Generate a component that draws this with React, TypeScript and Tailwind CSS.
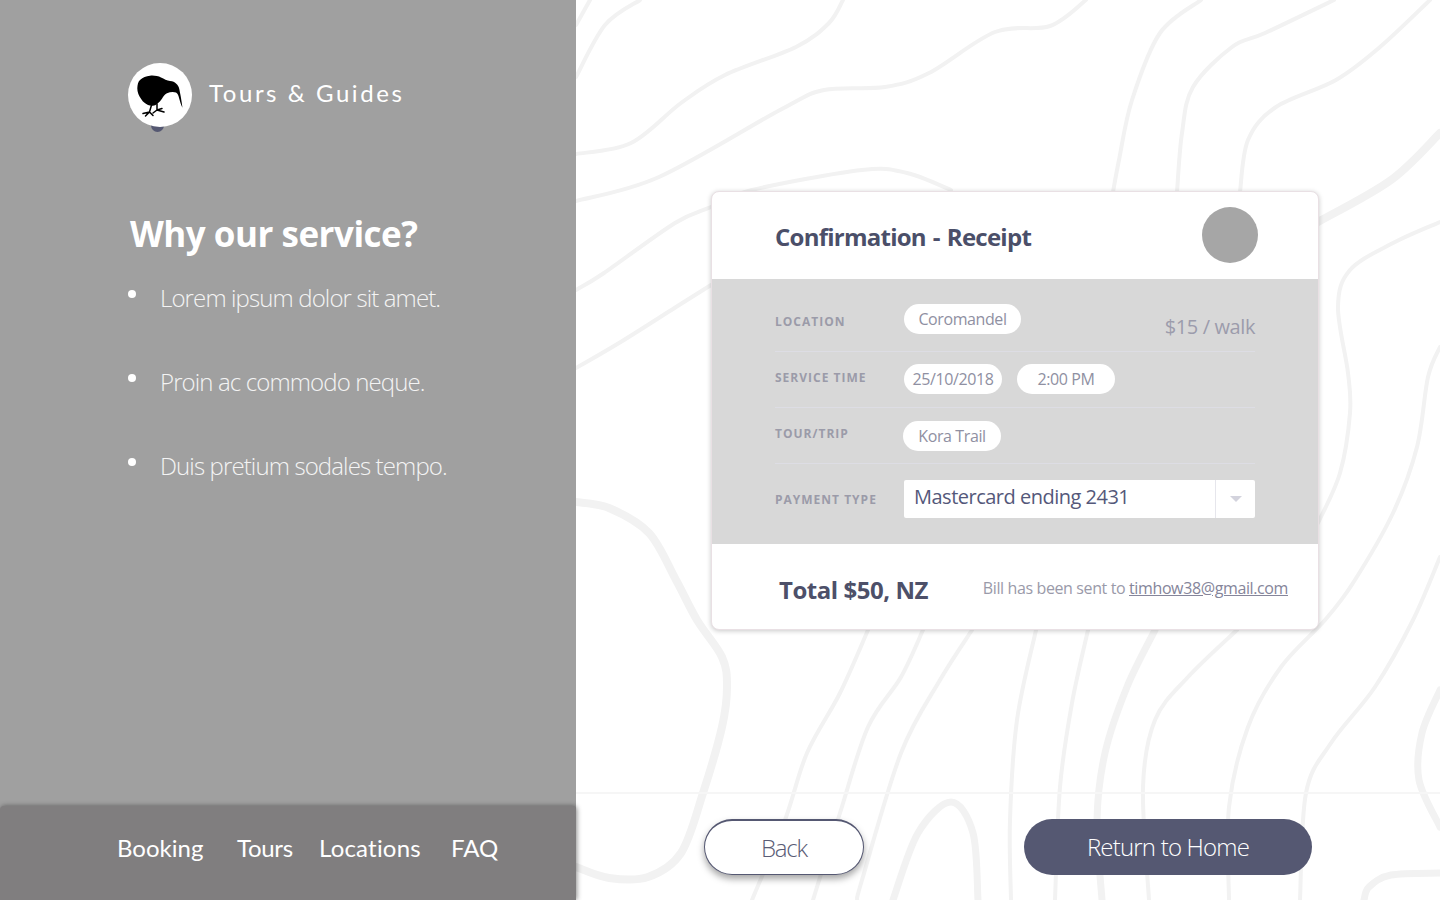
import React from "react";

type Pt = [number, number];

// page coordinates, the 576px sidebar is taken off in smooth()
const contours: { w: number; pts: Pt[] }[] = [
  { w: 4, pts: [[576, 25], [590, 0]] },
  { w: 4, pts: [[576, 77], [605, 25], [640, 0]] },
  { w: 4, pts: [[576, 154], [631, 143], [681, 103], [725, 75], [796, 47], [829, 23], [843, 0]] },
  { w: 4, pts: [[576, 201], [659, 177], [780, 110], [824, 90], [885, 87], [929, 73], [995, 32], [1050, 26], [1086, 0]] },
  { w: 4, pts: [[576, 290], [604, 273], [675, 223], [711, 207], [752, 190], [862, 170], [907, 173], [951, 190]] },
  { w: 4, pts: [[576, 368], [619, 343], [676, 307], [711, 285]] },
  { w: 4, pts: [[1201, 0], [1160, 33], [1132, 100], [1119, 160], [1113, 192]] },
  { w: 4, pts: [[1334, 0], [1265, 33], [1232, 47], [1193, 87], [1182, 133], [1177, 192]] },
  { w: 4, pts: [[1430, 0], [1380, 47], [1336, 80], [1276, 107], [1248, 140], [1240, 192]] },
  { w: 8, pts: [[1440, 133], [1391, 180], [1318, 222]] },
  { w: 4, pts: [[1440, 222], [1393, 243], [1350, 270], [1338, 307], [1348, 373], [1350, 413], [1340, 473], [1318, 523]] },
  { w: 4, pts: [[1440, 347], [1428, 377], [1417, 447], [1393, 513], [1353, 583], [1325, 620], [1281, 667], [1248, 727], [1229, 807], [1229, 900]] },
  { w: 4, pts: [[1440, 557], [1413, 620], [1375, 687], [1331, 743], [1306, 793], [1300, 900]] },
  { w: 4, pts: [[1237, 630], [1188, 677], [1155, 720], [1143, 787], [1149, 900]] },
  { w: 7, pts: [[1155, 630], [1127, 687], [1105, 753], [1097, 820], [1102, 900]] },
  { w: 4, pts: [[1088, 630], [1072, 703], [1060, 787], [1055, 900]] },
  { w: 4, pts: [[1036, 630], [1017, 720], [1010, 820], [1011, 900]] },
  { w: 4, pts: [[972, 630], [940, 680], [901, 753], [862, 880], [857, 900]] },
  { w: 4, pts: [[923, 630], [901, 677], [868, 727], [840, 813], [813, 900]] },
  { w: 4, pts: [[868, 630], [840, 693], [807, 753], [785, 820], [752, 900]] },
  { w: 7, pts: [[893, 900], [918, 833], [951, 802], [973, 833], [978, 900]] },
  { w: 8, pts: [[576, 502], [609, 508], [649, 533], [676, 580], [697, 620], [722, 657], [727, 687], [722, 727], [703, 793], [681, 853], [648, 877], [609, 878], [576, 867]] },
  { w: 7, pts: [[1440, 690], [1422, 733], [1419, 780], [1440, 827]] },
  { w: 7, pts: [[1440, 873], [1391, 875], [1369, 887], [1364, 900]] },
];

// catmull-rom through the traced points
function smooth(pts: Pt[]) {
  let d = `M${pts[0][0] - 576} ${pts[0][1]}`;
  for (let i = 0; i < pts.length - 1; i++) {
    const p0 = pts[i - 1] ?? pts[i];
    const p1 = pts[i];
    const p2 = pts[i + 1];
    const p3 = pts[i + 2] ?? p2;
    const c1x = p1[0] + (p2[0] - p0[0]) / 6 - 576;
    const c1y = p1[1] + (p2[1] - p0[1]) / 6;
    const c2x = p2[0] - (p3[0] - p1[0]) / 6 - 576;
    const c2y = p2[1] - (p3[1] - p1[1]) / 6;
    d += ` C${c1x} ${c1y} ${c2x} ${c2y} ${p2[0] - 576} ${p2[1]}`;
  }
  return d;
}

const Kiwi = () => (
  <svg viewBox="0 0 64 64" className="w-16 h-16">
    <path
      d="M9.3 25.3C9.5 21.5 10 19 12 17C15 14 18 13 22 12.7C26 12.3 30 13 33 14.5C36 16 39 17.5 42 18C45 18.4 46.5 19 48 20.5C50 22 51 24 51.4 26.5C52 30 52.6 32 53 35C53.4 38 54.2 41.5 54.4 44.8C53 42 52 38.5 51.2 35.5C50.5 32.8 49.8 30.5 48 29.6C45.5 28.6 42 29 39 30.2C37 31.2 36 32.5 35 34C33.5 36.5 32.5 38 31 39.2C29 41 27.5 42.2 26 42.6C24 43 22 42.8 20 42C17 40.6 15 38.8 13.5 36.5C10.8 33 9.2 29 9.3 25.3Z"
      fill="#000"
    />
    <g stroke="#000" strokeWidth="1.5" fill="none" strokeLinecap="round">
      <path d="M23.5 42L21.5 49M21.5 49L15 50.5M21.5 49L17.5 53M21.5 49L25 52.5" />
      <path d="M29 41L29 47M29 47L36 49M29 47L34 45.5M29 47L25 50" />
    </g>
  </svg>
);

const Bullet = ({ text }: { text: string }) => (
  <li className="flex items-start h-[84px]">
    <span className="w-2 h-2 rounded-full bg-white mt-[9px] mr-6 -ml-[2px]" />
    <span className="font-['Open_Sans'] font-light text-[24px] leading-[34px] text-[#f4f4f4] tracking-[-0.88px]">{text}</span>
  </li>
);

const Label = ({ text, className }: { text: string; className: string }) => (
  <span className={`w-[129px] shrink-0 font-['Open_Sans'] font-bold text-[12px] leading-4 tracking-[1px] text-[#9b9ba9] ${className}`}>
    {text}
  </span>
);

const Pill = ({ text, className }: { text: string; className: string }) => (
  <span className={`h-[30px] pb-px flex items-center justify-center rounded-full bg-white font-['Open_Sans'] text-[16px] text-[#8f90a2] tracking-[-0.4px] ${className}`}>
    {text}
  </span>
);

export default function App() {
  return (
    <div className="flex w-full h-[900px] overflow-hidden bg-white font-['Open_Sans',sans-serif]">
      <aside className="relative z-10 w-[576px] shrink-0 h-full flex flex-col bg-[#a0a0a0]">
        <div className="flex items-center pl-[128px] pt-[63px]">
          <div className="relative w-16 h-16">
            <span className="absolute left-[23px] top-[62px] w-[13px] h-[7px] rounded-b-full bg-[#555872]" />
            <span className="absolute inset-0 rounded-full bg-white" />
            <span className="absolute inset-0">
              <Kiwi />
            </span>
          </div>
          <span className="ml-[17px] -mt-1 font-['Lato'] text-[24px] leading-8 tracking-[2.55px] text-white">Tours &amp; Guides</span>
        </div>

        <h1 className="pl-[130px] pt-[83px] font-['Open_Sans'] font-bold text-[35px] leading-[48px] text-white tracking-[-0.5px]">
          Why our service?
        </h1>
        <ul className="pl-[130px] pt-[23px]">
          <Bullet text="Lorem ipsum dolor sit amet." />
          <Bullet text="Proin ac commodo neque." />
          <Bullet text="Duis pretium sodales tempo." />
        </ul>

        <nav className="mt-auto h-[94px] flex items-center pl-[117px] pb-[10px] rounded-t-[4px] bg-[#807e7f] shadow-[1px_0_5px_rgba(0,0,0,0.45)] font-['Lato'] text-[24px] text-white">
          <a className="w-[120px]">Booking</a>
          <a className="w-[82px] tracking-[-0.3px]">Tours</a>
          <a className="w-[132px] tracking-[0.2px]">Locations</a>
          <a>FAQ</a>
        </nav>
      </aside>

      <main className="relative flex-1 h-full flex flex-col">
        <svg className="absolute inset-0" width="864" height="900" fill="none" stroke="#f2f2f2" strokeLinecap="round">
          {contours.map((c, i) => (
            <path key={i} d={smooth(c.pts)} strokeWidth={c.w} />
          ))}
        </svg>

        <div className="relative flex-1 pt-[191px] pl-[135px]">
          <section className="w-[608px] h-[439px] rounded-[8px] border border-[#e9e0e4] bg-white shadow-[0_1px_5px_rgba(0,0,0,0.22)] overflow-hidden">
            <header className="h-[87px] flex items-center justify-between pl-[63px] pr-[60px]">
              <h2 className="font-['Open_Sans'] font-bold text-[24px] leading-8 mt-[2px] text-[#4b4f69] tracking-[-0.75px] [word-spacing:1.5px]">
                Confirmation - Receipt
              </h2>
              <div className="w-14 h-14 rounded-full bg-[#a6a6a6] -mt-[2px]" />
            </header>

            <div className="h-[265px] bg-[#d8d8d8] px-[63px]">
              <div className="h-[73px] pt-[25px] flex border-b border-[#dddde4]">
                <Label text="LOCATION" className="mt-[10px]" />
                <Pill text="Coromandel" className="w-[117px]" />
                <span className="ml-auto mt-[9px] font-['Open_Sans'] text-[20px] leading-7 text-[#9c9cac] tracking-[-0.4px]">$15 / walk</span>
              </div>
              <div className="h-[56px] pt-[12px] flex border-b border-[#dddde4]">
                <Label text="SERVICE TIME" className="mt-[6px]" />
                <Pill text="25/10/2018" className="w-[98px]" />
                <Pill text="2:00 PM" className="w-[98px] ml-[15px]" />
              </div>
              <div className="h-[56px] pt-[13px] flex border-b border-[#dddde4]">
                <Label text="TOUR/TRIP" className="mt-[5px]" />
                <Pill text="Kora Trail" className="w-[98px] -ml-px" />
              </div>
              <div className="pt-[16px] flex items-center">
                <Label text="PAYMENT TYPE" className="mt-[2px]" />
                <div className="w-[352px] h-[38px] flex rounded-[2px] bg-white">
                  <span className="flex-1 pl-[10px] font-['Open_Sans'] text-[20px] leading-[34px] text-[#54587a] tracking-[-0.5px]">
                    Mastercard ending 2431
                  </span>
                  <span className="w-[40px] flex items-center justify-center border-l border-[#e6e6ec]">
                    <span className="w-0 h-0 border-x-[6px] border-x-transparent border-t-[6px] border-t-[#d3d3dd]" />
                  </span>
                </div>
              </div>
            </div>

            <footer className="h-[85px] flex items-center pl-[67px]">
              <span className="font-['Open_Sans'] font-bold text-[24px] leading-8 mt-[7px] text-[#4d5069] tracking-[-0.45px]">Total $50, NZ</span>
              <span className="ml-auto mr-[30px] mt-[2px] font-['Open_Sans'] text-[16px] text-[#9a9aa9] tracking-[-0.38px]">
                Bill has been sent to <a className="underline text-[#85859a]">timhow38@gmail.com</a>
              </span>
            </footer>
          </section>
        </div>

        <footer className="relative h-[108px] border-t-2 border-[#f6f6f6] flex pt-[25px] pl-[128px]">
          <button className="w-[160px] h-[56px] rounded-[28px] border border-[#555872] border-t-2 bg-white shadow-[0_4px_7px_rgba(0,0,0,0.35)] font-['Open_Sans'] font-light text-[24px] text-[#5a5c76] tracking-[-1.2px]">
            Back
          </button>
          <button className="ml-[160px] w-[288px] h-[56px] rounded-[28px] bg-[#555872] font-['Open_Sans'] font-light text-[24px] text-white tracking-[-0.8px]">
            Return to Home
          </button>
        </footer>
      </main>
    </div>
  );
}
